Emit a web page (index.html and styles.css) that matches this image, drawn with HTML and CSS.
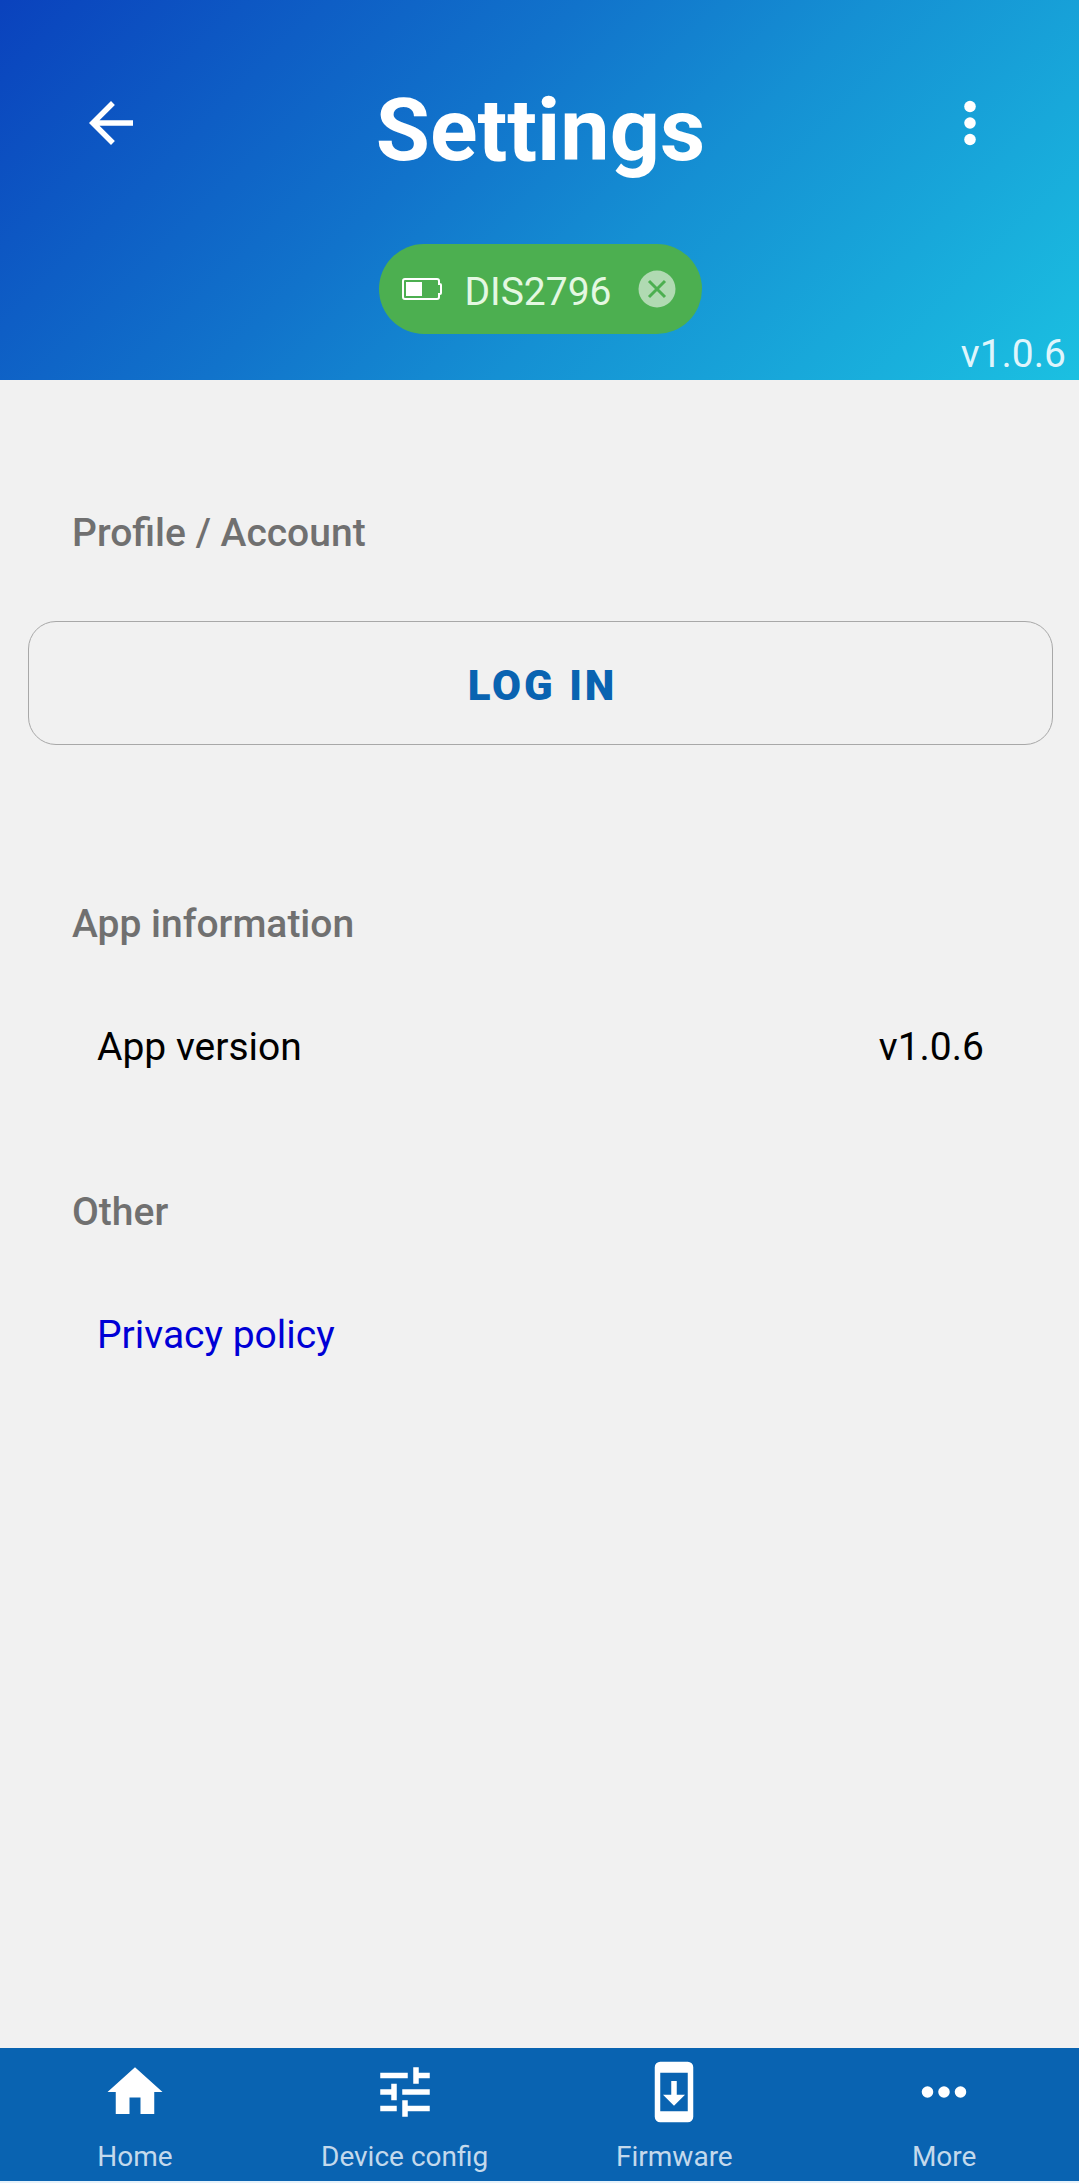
FILE: index.html
```html
<!DOCTYPE html>
<html lang="en">
<head>
<meta charset="utf-8">
<meta name="viewport" content="width=device-width, initial-scale=1">
<title>Settings</title>
<link rel="stylesheet" href="styles.css">
</head>
<body>
<header class="header">
  <div class="title-bar">
    <button class="icon-button" type="button" aria-label="Back">
      <svg class="icon" viewBox="0 0 24 24" aria-hidden="true"><path d="M20 11H7.83l5.59-5.59L12 4l-8 8 8 8 1.41-1.41L7.83 13H20z"/></svg>
    </button>
    <h1 class="title">Settings</h1>
    <button class="icon-button" type="button" aria-label="Menu">
      <svg class="icon" viewBox="0 0 24 24" aria-hidden="true"><circle cx="12" cy="6" r="2.1"/><circle cx="12" cy="12" r="2.1"/><circle cx="12" cy="18" r="2.1"/></svg>
    </button>
  </div>
  <div class="chip">
    <svg class="battery" viewBox="0 0 40 22" aria-hidden="true">
      <path class="battery-outline" d="M3 1H35Q37 1 37 3V6H38Q39 6 39 7V15Q39 16 38 16H37V19Q37 21 35 21H3Q1 21 1 19V3Q1 1 3 1Z"/>
      <rect x="4" y="4" width="16" height="14"/>
    </svg>
    <span class="chip-name">DIS2796</span>
    <button class="chip-close" type="button" aria-label="Disconnect">
      <svg class="chip-cross" viewBox="0 0 38 38" aria-hidden="true"><circle cx="19" cy="19" r="18.5"/><path d="M11 11L27 27M27 11L11 27"/></svg>
    </button>
  </div>
  <span class="header-version">v1.0.6</span>
</header>
<main class="content">
  <section class="section section-account">
    <h2 class="section-title">Profile / Account</h2>
    <button class="login" type="button">LOG IN</button>
  </section>
  <section class="section">
    <h2 class="section-title">App information</h2>
    <div class="row"><span>App version</span><span>v1.0.6</span></div>
  </section>
  <section class="section">
    <h2 class="section-title">Other</h2>
    <div class="row"><a class="link" href="#privacy">Privacy policy</a></div>
  </section>
</main>
<nav class="tabs">
  <a class="tab" href="#home">
    <svg class="icon" viewBox="0 0 24 24" aria-hidden="true"><path d="M10 20v-6h4v6h5v-8h3L12 3 2 12h3v8z"/></svg>
    <span>Home</span>
  </a>
  <a class="tab" href="#config">
    <svg class="icon" viewBox="0 0 24 24" aria-hidden="true"><path d="M3 17v2h6v-2H3zM3 5v2h10V5H3zm10 16v-2h8v-2h-8v-2h-2v6h2zM7 9v2H3v2h4v2h2V9H7zm14 4v-2H11v2h10zm-6-4h2V7h4V5h-4V3h-2v6z"/></svg>
    <span>Device config</span>
  </a>
  <a class="tab" href="#firmware">
    <svg class="icon" viewBox="0 0 24 24" aria-hidden="true"><path d="M17 1H7a2 2 0 0 0-2 2v18a2 2 0 0 0 2 2h10a2 2 0 0 0 2-2V3a2 2 0 0 0-2-2m0 18H7V5h10v14m-1-6h-3V8h-2v5H8l4 4 4-4z"/></svg>
    <span>Firmware</span>
  </a>
  <a class="tab" href="#more">
    <svg class="icon" viewBox="0 0 24 24" aria-hidden="true"><circle cx="6" cy="12" r="2.1"/><circle cx="12" cy="12" r="2.1"/><circle cx="18" cy="12" r="2.1"/></svg>
    <span>More</span>
  </a>
</nav>
</body>
</html>
```
FILE: styles.css
```css
* {
  box-sizing: border-box;
}

body {
  margin: 0;
  min-height: 100vh;
  display: flex;
  flex-direction: column;
  background: #f1f1f1;
  color: #000;
  font-family: Roboto, "Liberation Sans", sans-serif;
  font-size: 39px;
  line-height: 48px;
}

button {
  padding: 0;
  border: 0;
  background: none;
  color: inherit;
  font: inherit;
  cursor: pointer;
}

a {
  color: inherit;
  text-decoration: none;
}

.icon {
  display: block;
  width: 66px;
  height: 66px;
  fill: #fff;
}

.header {
  position: relative;
  display: flex;
  flex-direction: column;
  align-items: center;
  gap: 64px;
  padding: 80px 76px 46px 78px;
  background: linear-gradient(135deg, #0a42bd 0%, #1173cb 40%, #1590d3 60%, #1bc0e1 100%);
  color: #fff;
}

.title-bar {
  width: 100%;
  display: flex;
  justify-content: space-between;
  align-items: flex-start;
}

.icon-button {
  padding: 10px 0;
}

.title {
  margin: 0;
  font-size: 88px;
  line-height: 100px;
  font-weight: 700;
}

.chip {
  display: flex;
  align-items: center;
  height: 90px;
  padding: 0 26px 0 23px;
  border-radius: 45px;
  background: #4caf50;
}

.battery {
  width: 40px;
  height: 22px;
  fill: #fff;
}

.battery-outline {
  fill: none;
  stroke: #fff;
  stroke-width: 2;
}

.chip-name {
  margin: 6px 26px 0 22px;
  color: #e4f8e2;
}

.chip-cross {
  display: block;
  width: 38px;
  height: 38px;
  fill: #b0dab2;
  stroke: #4caf50;
  stroke-width: 3;
}

.chip-cross circle {
  stroke: none;
}

.header-version {
  position: absolute;
  right: 13px;
  bottom: 2px;
  color: #dff5fc;
}

.content {
  flex: 1;
  padding: 129px 26px 64px 28px;
}

.section {
  margin-bottom: 117px;
}

.section-account {
  margin-bottom: 155px;
}

.section-title {
  margin: 0 44px;
  color: #707070;
  font-size: 39px;
  line-height: 48px;
  font-weight: 500;
}

.login {
  display: block;
  width: 100%;
  height: 124px;
  margin-top: 64px;
  padding: 6px 0 0 4px;
  border: 1px solid #a8a8a8;
  border-radius: 28px;
  color: #0963b1;
  font-size: 42px;
  font-weight: 900;
  letter-spacing: 3px;
}

.row {
  display: flex;
  justify-content: space-between;
  margin: 75px 69px 0;
}

.link {
  color: #0000d6;
}

.tabs {
  display: grid;
  grid-template-columns: repeat(4, 1fr);
  padding: 11px 0 8px;
  border-bottom: 2px solid #e6f1fa;
  background: #0963b1;
  color: #c3d9ec;
  font-size: 28px;
  line-height: 32px;
}

.tab {
  display: flex;
  flex-direction: column;
  align-items: center;
  gap: 16px;
}
```
